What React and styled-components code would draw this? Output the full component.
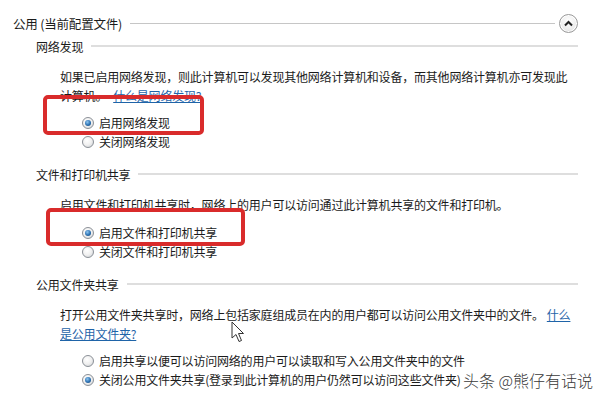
import React from 'react';
import styled, { createGlobalStyle } from 'styled-components';

const Global = createGlobalStyle`
  html, body { margin: 0; padding: 0; background: #fff; }
  body { font-family: "Noto Sans CJK SC", "Liberation Sans", sans-serif; }
`;

const Page = styled.div`
  position: relative;
  width: 600px;
  height: 400px;
  overflow: hidden;
  padding-top: 13px;
  box-sizing: border-box;
  font-size: 12px;
  letter-spacing: -0.2px;
  color: #1b1b1b;
`;

const TopRow = styled.div`
  display: flex;
  align-items: center;
  height: 20px;
  padding-left: 13px;
  padding-right: 22px;
`;

const Title = styled.span`
  font-size: 12.5px;
  white-space: nowrap;
`;

const Rule = styled.div`
  flex: 1;
  height: ${p => p.thick ? 2 : 1}px;
  background: ${p => p.thick ? '#dedede' : '#c6c6c6'};
  margin: 0 ${p => p.gapRight || 0}px 0 8px;
`;

const Collapse = styled.button`
  width: 19px;
  height: 19px;
  padding: 0;
  border-radius: 50%;
  border: 1px solid #9a9a9a;
  background: radial-gradient(circle at 50% 35%, #ffffff 0%, #ececec 60%, #cfcfcf 100%);
  display: flex;
  align-items: center;
  justify-content: center;
  box-shadow: inset 0 0 0 1px #fff;
`;

const Section = styled.section`
  margin-top: ${p => p.first ? 3 : 13}px;
`;

const Heading = styled.div`
  display: flex;
  align-items: center;
  height: 20px;
  padding-left: 36px;
  padding-right: 22px;
  white-space: nowrap;
`;

const Para = styled.p`
  margin: 11px 0 0;
  padding-left: 60px;
  padding-right: 22px;
  line-height: 19px;
`;

const Link = styled.a`
  color: #1f64a8;
  text-decoration: underline;
  margin-left: ${p => p.tight ? 3 : 6}px;
`;

const Options = styled.div`
  position: relative;
  margin-top: ${p => p.gap || 8}px;
  padding-left: 82px;
`;

const Option = styled.label`
  display: flex;
  align-items: center;
  height: 19px;
  gap: 5px;
  white-space: nowrap;
`;

const Radio = styled.span`
  position: relative;
  width: 12px;
  height: 12px;
  border-radius: 50%;
  border: 1px solid #8b9097;
  box-sizing: border-box;
  background: radial-gradient(circle at 40% 35%, #ffffff 0%, #f0f0f0 50%, #c9cdd2 100%);
  flex-shrink: 0;
  &::after {
    content: '';
    display: ${p => p.checked ? 'block' : 'none'};
    position: absolute;
    left: 2px;
    top: 2px;
    width: 6px;
    height: 6px;
    border-radius: 50%;
    background: radial-gradient(circle at 40% 35%, #8fc6f0 0%, #2a70b2 55%, #173f6b 100%);
  }
`;

const Highlight = styled.div`
  position: absolute;
  left: ${p => p.left}px;
  top: ${p => p.top}px;
  width: ${p => p.w}px;
  height: ${p => p.h}px;
  border: 4px solid #d92b2b;
  border-radius: 5px;
  box-sizing: border-box;
  pointer-events: none;
`;

const Cursor = styled.svg`
  position: absolute;
  left: 231px;
  top: 321px;
`;

const Watermark = styled.div`
  position: absolute;
  left: 463px;
  top: 369px;
  font-size: 16px;
  line-height: 22px;
  letter-spacing: 0;
  color: #3a3a3a;
  white-space: nowrap;
  font-weight: 300;
`;

const Choice = ({ checked, children }) => (
  <Option>
    <Radio checked={checked} />
    <span>{children}</span>
  </Option>
);

export default function App() {
  return (
    <Page>
      <Global />
      <TopRow>
        <Title>公用 (当前配置文件)</Title>
        <Rule gapRight={4} />
        <Collapse>
          <svg width="9" height="7" viewBox="0 0 9 7">
            <path d="M1 5.5 L4.5 2 L8 5.5" fill="none" stroke="#222" strokeWidth="2" />
          </svg>
        </Collapse>
      </TopRow>

      <Section first>
        <Heading>网络发现<Rule thick /></Heading>
        <Para>
          如果已启用网络发现，则此计算机可以发现其他网络计算机和设备，而其他网络计算机亦可发现此计算机。
          <Link>什么是网络发现?</Link>
        </Para>
        <Options>
          <Highlight left={43} top={-18} w={161} h={40} />
          <Choice checked>启用网络发现</Choice>
          <Choice>关闭网络发现</Choice>
        </Options>
      </Section>

      <Section>
        <Heading>文件和打印机共享<Rule thick /></Heading>
        <Para>启用文件和打印机共享时，网络上的用户可以访问通过此计算机共享的文件和打印机。</Para>
        <Options gap={9}>
          <Highlight left={46} top={-15} w={199} h={38} />
          <Choice checked>启用文件和打印机共享</Choice>
          <Choice>关闭文件和打印机共享</Choice>
        </Options>
      </Section>

      <Section>
        <Heading>公用文件夹共享<Rule thick /></Heading>
        <Para>
          打开公用文件夹共享时，网络上包括家庭组成员在内的用户都可以访问公用文件夹中的文件。<Link tight>什么是公用文件夹?</Link>
        </Para>
        <Options>
          <Choice>启用共享以便可以访问网络的用户可以读取和写入公用文件夹中的文件</Choice>
          <Choice checked>关闭公用文件夹共享(登录到此计算机的用户仍然可以访问这些文件夹)</Choice>
        </Options>
      </Section>

      <Cursor width="14" height="22" viewBox="0 0 14 22">
        <path d="M1 1 L1 17 L5 13.5 L8 20.5 L10.5 19.5 L7.5 12.5 L12.5 12.5 Z" fill="#fff" stroke="#333" strokeWidth="1" strokeLinejoin="round" />
      </Cursor>
      <Watermark>头条 @熊仔有话说</Watermark>
    </Page>
  );
}
